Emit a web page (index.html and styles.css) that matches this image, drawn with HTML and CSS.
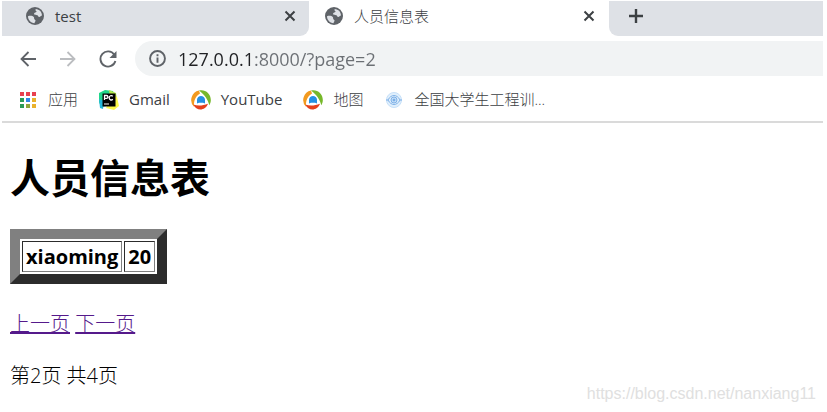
FILE: index.html
```html
<!DOCTYPE html>
<html lang="zh-CN">
<head>
    <meta charset="UTF-8">
    <meta name="viewport" content="width=device-width, initial-scale=1.0">
    <title>人员信息表</title>
    <link rel="stylesheet" href="styles.css">
</head>
<body>
    <!-- shared icons -->
    <svg class="defs" aria-hidden="true">
        <symbol id="globe" viewBox="0 0 18 18">
            <circle cx="9" cy="9" r="9" fill="#5f6368"/>
            <path d="M2 9.2C4 8.600 6.800 8.800 7.800 10c.8 1-.2 1.600.8 2.400.9.700 1.400 1 .6 2.100l-.8 1.700C4.900 16 2 13 2 9.200zM9.600 1.900C13.500 2.200 16 5 16 8.600c-1.200.4-1.900 1.600-3.100 1.300-1-.3-.5-1.400-1.700-1.700-1.200-.2-2.400.1-3-.9-.6-1.100.7-1.700 1.800-2.100 1-.5.6-1.200-.4-1.500z" fill="#dee1e6"/>
        </symbol>
        <symbol id="close" viewBox="0 0 12 12">
            <path d="M1.500 1.500l9 9M10.500 1.500l-9 9" stroke="#3c4043" stroke-width="2" fill="none"/>
        </symbol>
        <symbol id="swirl" viewBox="0 0 20 20">
            <path d="M8 .5A9.700 9.700 0 0 0 3 16.800C2.800 12 3.500 7 9 3.600z" fill="#f29a1f"/>
            <path d="M8 .5c6-1.700 12.300 3 11.800 10.300-.1 1.700-.7 3-1.500 4.500C17 9.500 14 5.500 8 .5z" fill="#76b82a"/>
            <path d="M2.300 14.500c4 1.600 9.300 1.400 14.700-.7-2.500 7-11.500 8-14.700.7z" fill="#e5401c"/>
            <path d="M6 13.500V9.700C6 4.600 14 4.600 14 9.700v3.800l-2-.8H8z" fill="#2490e3"/>
        </symbol>
    </svg>

    <header class="browser">
        <nav class="tabs" aria-label="标签页">
            <div class="tab">
                <svg class="tab-icon"><use href="#globe"/></svg>
                <span class="tab-title">test</span>
                <button class="close" aria-label="关闭"><svg><use href="#close"/></svg></button>
            </div>
            <div class="tab active">
                <svg class="tab-icon"><use href="#globe"/></svg>
                <span class="tab-title zh">人员信息表</span>
                <button class="close" aria-label="关闭"><svg><use href="#close"/></svg></button>
            </div>
            <div class="tab-rest">
                <button class="new-tab" aria-label="新标签页">
                    <svg viewBox="0 0 16 16"><path d="M8 1v14M1 8h14" stroke="#3c4043" stroke-width="2.400"/></svg>
                </button>
            </div>
        </nav>

        <div class="toolbar">
            <button class="tool" aria-label="后退">
                <svg viewBox="0 0 18 18"><path d="M17 9H2.500M9.500 2l-7 7 7 7" fill="none" stroke="#5f6368" stroke-width="1.800"/></svg>
            </button>
            <button class="tool" aria-label="前进">
                <svg viewBox="0 0 18 18"><path d="M1 9h14.500M8.500 2l7 7-7 7" fill="none" stroke="#bbbdc0" stroke-width="1.800"/></svg>
            </button>
            <button class="tool" aria-label="重新加载">
                <svg viewBox="0 0 18 18"><path d="M15.300 4.600A7.600 7.600 0 1 0 16.400 11" fill="none" stroke="#5f6368" stroke-width="1.900"/><path d="M17.500 1v7h-7z" fill="#5f6368"/></svg>
            </button>
            <div class="address">
                <svg class="info" viewBox="0 0 16 16"><circle cx="8" cy="8" r="7" fill="none" stroke="#5f6368" stroke-width="1.800"/><path d="M8 7v5M8 4v1.900" stroke="#5f6368" stroke-width="1.800"/></svg>
                <input class="url" type="text" value="127.0.0.1:8000/?page=2" aria-label="地址栏">
            </div>
        </div>

        <nav class="bookmarks" aria-label="书签">
            <a href="#" class="zh">
                <svg viewBox="0 0 20 20">
                    <path d="M2 2h4v4H2zM8 2h4v4H8zM14 2h4v4h-4z" fill="#e8404f"/>
                    <path d="M2 8h4v4H2zM2 14h4v4H2z" fill="#2c9b57"/>
                    <path d="M8 8h4v4H8z" fill="#2f86e8"/>
                    <path d="M14 8h4v4h-4zM14 14h4v4h-4z" fill="#eab22c"/>
                    <path d="M8 14h4v4H8z" fill="#8fa53a"/>
                </svg>
                应用
            </a>
            <a href="#">
                <svg viewBox="0 0 20 20">
                    <path d="M0 3l6-3 8 1 2 6-4 8-10 2-2-5z" fill="#21d789"/>
                    <path d="M10 0l7 3 1 6h-7z" fill="#b5ea4d"/>
                    <path d="M0 9l5 2-1 8-3-1z" fill="#24b8dc"/>
                    <path d="M14 6l4 1 2 9-5 4-8-2z" fill="#fcf84a"/>
                    <path d="M3.500 3.500h13v13h-13z" fill="#000"/>
                    <path d="M5.500 10V5.500h2a1.300 1.300 0 0 1 0 2.800h-2M13.800 6.300c-1.400-1.400-3.600-.6-3.600 1.500s2.200 2.900 3.600 1.500" fill="none" stroke="#fff" stroke-width="1.300"/>
                    <path d="M5 13.500h5v1H5z" fill="#fff"/>
                </svg>
                Gmail
            </a>
            <a href="#"><svg><use href="#swirl"/></svg>YouTube</a>
            <a href="#" class="zh"><svg><use href="#swirl"/></svg>地图</a>
            <a href="#" class="zh">
                <svg viewBox="0 0 20 20" fill="none" stroke="#80b2e8">
                    <circle cx="10" cy="10" r="7.500" fill="#e0effc" stroke="#c6e0f9"/>
                    <path d="M2 10h2c3-6 9-6 12 0h2M4 10c3 6 9 6 12 0"/>
                    <circle cx="10" cy="10" r="3" fill="#c5e0f9"/>
                    <circle cx="10" cy="10" r="1" fill="#5b9be0"/>
                </svg>
                全国大学生工程训...
            </a>
        </nav>
    </header>

    <main class="page">
        <h1>人员信息表</h1>
        <table class="people">
            <tr>
                <th>xiaoming</th>
                <th>20</th>
            </tr>
        </table>
        <p class="pager zh"><a href="?page=1">上一页</a> <a href="?page=3">下一页</a></p>
        <p class="count zh">第2页 共4页</p>
    </main>

    <div class="watermark">https://blog.csdn.net/nanxiang11</div>
</body>
</html>
```

FILE: styles.css
```css
* {
    box-sizing: border-box;
}
body {
    position: relative;
    min-height: 100vh;
    margin: 0;
    background: #fff;
    color: #000;
    font-family: "Open Sans", "Noto Sans CJK SC", sans-serif;
}
button {
    display: flex;
    padding: 0;
    border: 0;
    background: none;
    cursor: pointer;
}
.defs {
    position: absolute;
    width: 0;
    height: 0;
}
.zh {
    font-weight: 300;
}

/* browser chrome */
.browser {
    padding: 1px 4px 0 2px;
    color: #3c4043;
    font-size: 15px;
}
.tabs {
    display: flex;
    height: 35px;
}
.tab {
    display: flex;
    align-items: center;
    gap: 11px;
    flex: 0 1 300px;
    padding: 0 14px 6px 16px;
    background: #fff;
}
.tab:first-child {
    flex-basis: 307px;
    padding: 0 13px 6px 24px;
}
.tab:not(.active) {
    background: #dee1e6;
    border-bottom-right-radius: 9px;
}
.tab-icon {
    width: 18px;
    height: 18px;
}
.tab-title {
    flex: 1;
    line-height: 20px;
}
.close svg {
    width: 12px;
    height: 12px;
}
.tab-rest {
    flex: 1;
    display: flex;
    align-items: center;
    padding: 0 19px 6px;
    background: #dee1e6;
    border-bottom-left-radius: 9px;
}
.new-tab svg {
    width: 16px;
    height: 16px;
}
.toolbar {
    display: flex;
    align-items: center;
    gap: 22px;
    padding: 5px 0 0 17px;
}
.tool svg {
    width: 18px;
    height: 18px;
}
.address {
    flex: 1;
    display: flex;
    align-items: center;
    gap: 12px;
    height: 35px;
    margin-left: -4px;
    padding-left: 14px;
    background: #f1f3f4;
    border-radius: 18px 0 0 18px;
}
.info {
    width: 17px;
    height: 17px;
}
.url {
    flex: 1;
    padding: 0;
    border: 0;
    outline: 0;
    /* host is dark, the rest of the address is gray */
    background: linear-gradient(to right, #202124 76px, #6b6f74 76px);
    -webkit-background-clip: text;
    background-clip: text;
    color: transparent;
    font-family: inherit;
    font-size: 18px;
    line-height: 28px;
}
.bookmarks {
    display: flex;
    gap: 21px;
    padding: 12px 0 10px 16px;
    border-bottom: 2px solid #dadada;
}
.bookmarks a {
    display: flex;
    align-items: center;
    gap: 10px;
    color: inherit;
    line-height: 23px;
    text-decoration: none;
    white-space: nowrap;
}
.bookmarks svg {
    width: 20px;
    height: 20px;
}

/* page */
.page {
    padding: 27px 10px 0;
    font-size: 20px;
}
.page h1 {
    margin: 0;
    font-size: 40px;
    line-height: 56px;
}
.people {
    margin-top: 23px;
    border: 10px solid;
    border-color: #808080 #2c2c2c #2c2c2c #808080;
    border-spacing: 2px;
}
.people th {
    padding: 2px 3px;
    border: 1px solid;
    border-color: #2c2c2c #808080 #808080 #2c2c2c;
    line-height: 25px;
}
.page p {
    margin: 27px 0 0;
    line-height: 25px;
}
.pager a {
    color: #551a8b;
    text-decoration-thickness: 2px;
}
.watermark {
    position: absolute;
    right: 11px;
    bottom: 8px;
    color: #e0e0e0;
    font-family: "Liberation Sans", Arial, sans-serif;
    font-size: 16px;
    line-height: 20px;
}
```
